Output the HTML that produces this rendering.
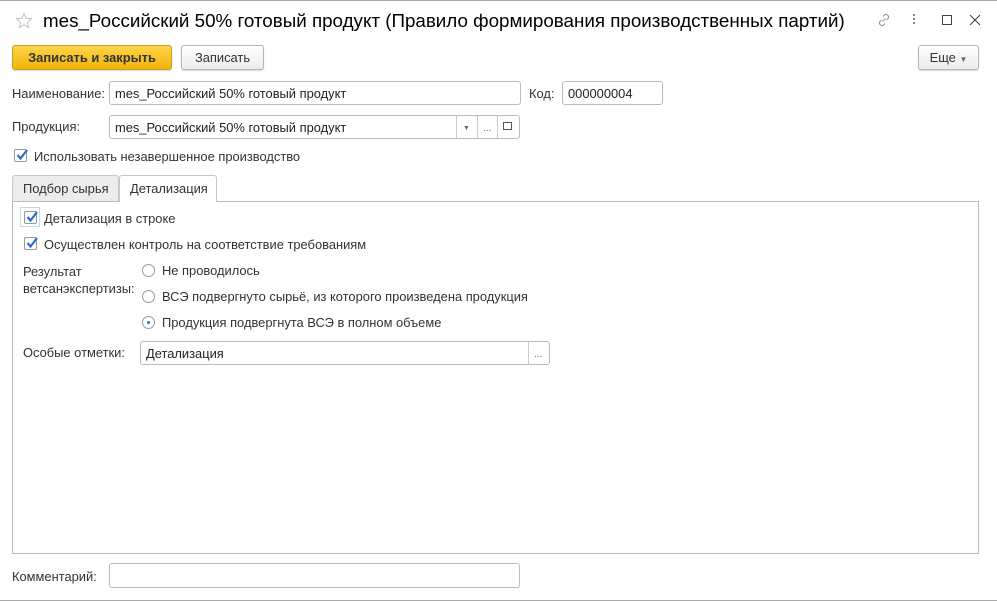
<!DOCTYPE html>
<html><head><meta charset="utf-8"><style>
body{margin:0;width:997px;height:601px;background:#fff;font-family:"Liberation Sans",Arial,sans-serif;font-size:12.9px;color:#333;position:relative;overflow:hidden}
.a{position:absolute;white-space:nowrap}
.inp{position:absolute;border:1px solid #bbb;border-radius:3px;background:#fff;box-sizing:border-box;padding:0 5px;line-height:24px;color:#222}
.btn{position:absolute;border:1px solid #b5b5b5;border-radius:3px;box-sizing:border-box;text-align:center;line-height:23px;background:linear-gradient(#fff,#ececec);box-shadow:0 1px 1px rgba(0,0,0,.15)}
.cb{position:absolute;width:13px;height:13px;border:1px solid #999;border-radius:2px;background:#fff;box-sizing:border-box}
.cb svg{position:absolute;left:0;top:-2px}
.rd{position:absolute;width:13px;height:13px;border:1px solid #999;border-radius:50%;box-sizing:border-box;background:#fff}
.sep{position:absolute;top:0;bottom:0;width:1px;background:#ccc}
</style></head><body>
<div class="a" style="left:0;top:0;width:997px;height:1px;background:#aaa"></div>
<div class="a" style="left:0;top:600px;width:997px;height:1px;background:#aaa"></div>
<svg class="a" style="left:15px;top:12px" width="18" height="18" viewBox="0 0 18 18"><path d="M9 1.5l2.2 4.8 5.2.5-3.9 3.5 1.1 5.1L9 12.8l-4.6 2.6 1.1-5.1L1.6 6.8l5.2-.5z" fill="none" stroke="#bbb" stroke-width="1"/></svg>
<div class="a" style="left:43px;top:10px;font-size:18.8px;color:#000">mes_Российский 50% готовый продукт (Правило формирования производственных партий)</div>
<svg class="a" style="left:876px;top:12px" width="16" height="16" viewBox="0 0 16 16"><path d="M6.5 9.5l3-3M7 4.5l1.5-1.5a2.5 2.5 0 013.5 3.5L10.5 8M9 11.5L7.5 13a2.5 2.5 0 01-3.5-3.5L5.5 8" fill="none" stroke="#999" stroke-width="1.1"/></svg>
<div class="a" style="left:913px;top:14px;width:2px;height:2px;background:#888;box-shadow:0 4px 0 #888,0 8px 0 #888"></div>
<div class="a" style="left:942px;top:15px;width:10px;height:10px;border:1px solid #444;box-sizing:border-box"></div>
<svg class="a" style="left:969px;top:14px" width="12" height="12" viewBox="0 0 12 12"><path d="M1 1l10 10M11 1L1 11" stroke="#444" stroke-width="1.1"/></svg>
<div class="btn" style="left:12px;top:45px;width:160px;height:25px;background:linear-gradient(#fdd54a,#f1b40a);border-color:#c9a020;font-weight:bold;color:#333">Записать и закрыть</div>
<div class="btn" style="left:181px;top:45px;width:83px;height:25px">Записать</div>
<div class="btn" style="left:918px;top:45px;width:61px;height:25px">Еще <span style="font-size:8px;color:#666">▼</span></div>
<div class="a" style="left:12px;top:86px">Наименование:</div>
<div class="inp" style="left:109px;top:81px;width:412px;height:24px">mes_Российский 50% готовый продукт</div>
<div class="a" style="left:529px;top:86px">Код:</div>
<div class="inp" style="left:562px;top:81px;width:101px;height:24px">000000004</div>
<div class="a" style="left:12px;top:119px">Продукция:</div>
<div class="inp" style="left:109px;top:115px;width:411px;height:24px">mes_Российский 50% готовый продукт
<div class="sep" style="left:346px"></div><div class="sep" style="left:367px"></div><div class="sep" style="left:387px"></div>
<span class="a" style="left:353px;top:1px;font-size:7px;color:#666">▼</span><span class="a" style="left:373px;top:1px;color:#666;font-size:10px">...</span>
<span class="a" style="left:393px;top:6px;width:7px;height:6px;border:1px solid #555"></span></div>
<div class="cb" style="left:14px;top:149px"><svg width="14" height="14"><path d="M2.5 7l3 3.5L12 2" fill="none" stroke="#2a6fc4" stroke-width="2.2"/></svg></div>
<div class="a" style="left:34px;top:149px">Использовать незавершенное производство</div>
<div class="a" style="left:12px;top:175px;width:107px;height:26px;background:#ececec;border:1px solid #c8c8c8;border-bottom:none;border-radius:3px 3px 0 0;box-sizing:border-box;padding:5px 0 0 10px">Подбор сырья</div>
<div class="a" style="left:119px;top:175px;width:98px;height:27px;background:#fff;border:1px solid #c8c8c8;border-bottom:none;border-radius:3px 3px 0 0;box-sizing:border-box;padding:5px 0 0 10px;z-index:2">Детализация</div>
<div class="a" style="left:12px;top:201px;width:967px;height:353px;border:1px solid #bbb;box-sizing:border-box"></div>
<div class="a" style="left:20px;top:207px;width:20px;height:20px;border:1px solid #c5d8ee;box-sizing:border-box"></div>
<div class="cb" style="left:24px;top:211px"><svg width="14" height="14"><path d="M2.5 7l3 3.5L12 2" fill="none" stroke="#2a6fc4" stroke-width="2.2"/></svg></div>
<div class="a" style="left:44px;top:211px">Детализация в строке</div>
<div class="cb" style="left:24px;top:237px"><svg width="14" height="14"><path d="M2.5 7l3 3.5L12 2" fill="none" stroke="#2a6fc4" stroke-width="2.2"/></svg></div>
<div class="a" style="left:44px;top:237px">Осуществлен контроль на соответствие требованиям</div>
<div class="a" style="left:23px;top:263px;line-height:17px">Результат<br>ветсанэкспертизы:</div>
<div class="rd" style="left:142px;top:264px"></div><div class="a" style="left:162px;top:263px">Не проводилось</div>
<div class="rd" style="left:142px;top:290px"></div><div class="a" style="left:162px;top:289px">ВСЭ подвергнуто сырьё, из которого произведена продукция</div>
<div class="rd" style="left:142px;top:316px"><div style="position:absolute;left:4px;top:4px;width:3px;height:3px;border-radius:50%;background:#2a6fc4"></div></div><div class="a" style="left:162px;top:315px">Продукция подвергнута ВСЭ в полном объеме</div>
<div class="a" style="left:23px;top:345px">Особые отметки:</div>
<div class="inp" style="left:140px;top:341px;width:410px;height:24px">Детализация<div class="sep" style="left:387px"></div><span class="a" style="left:393px;top:1px;color:#666;font-size:10px">...</span></div>
<div class="a" style="left:12px;top:569px">Комментарий:</div>
<div class="inp" style="left:109px;top:563px;width:411px;height:25px"></div>
</body></html>
